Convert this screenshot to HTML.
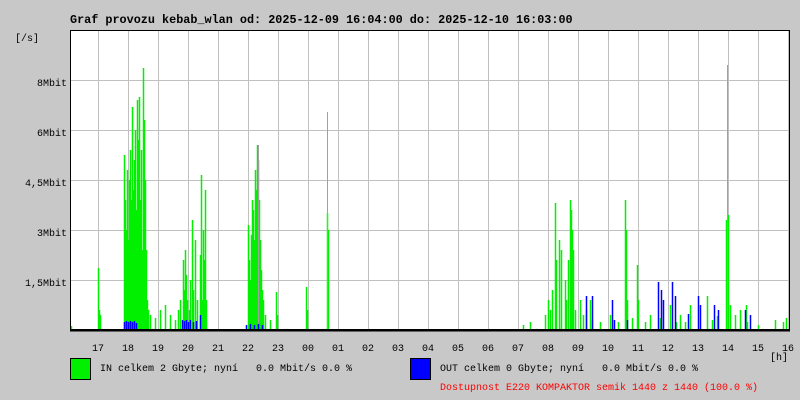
<!DOCTYPE html>
<html><head><meta charset="utf-8"><style>
html,body{margin:0;padding:0;background:#c8c8c8;width:800px;height:400px;overflow:hidden}
svg{display:block}
text{font-family:"Liberation Mono","DejaVu Sans Mono",monospace;font-size:10px;fill:#000;white-space:pre}
</style></head><body>
<svg width="800" height="400" xmlns="http://www.w3.org/2000/svg">
<rect width="800" height="400" fill="#c8c8c8"/>
<rect x="70" y="30" width="720" height="300" fill="#fff"/>
<g stroke="#c0c0c0" stroke-width="1" id="grid"></g>
<g id="g" stroke="#00f000" stroke-width="1.5"></g>
<g id="gr" stroke="#a0a0a0" stroke-width="1"></g>
<g id="b" stroke="#0000ff" stroke-width="1.5"></g>
<rect x="70.5" y="30.5" width="719" height="299" fill="none" stroke="#000" stroke-width="1"/>
<line x1="70" y1="330.5" x2="790" y2="330.5" stroke="#000" stroke-width="2"/>
<text x="70" y="23" style="font-size:11.8px;font-weight:bold">Graf provozu kebab_wlan od: 2025-12-09 16:04:00 do: 2025-12-10 16:03:00</text>
<text x="15" y="41">[/s]</text>
<g text-anchor="end">
<text x="67" y="86">8Mbit</text><text x="67" y="136">6Mbit</text><text x="67" y="186">4,5Mbit</text><text x="67" y="236">3Mbit</text><text x="67" y="286">1,5Mbit</text>
</g>
<g text-anchor="middle" id="hrs"></g>
<text x="770" y="360">[h]</text>
<rect x="70.5" y="358.5" width="20" height="21" fill="#00f000" stroke="#000"/>
<text x="100" y="371" xml:space="preserve">IN celkem 2 Gbyte; nyní   0.0 Mbit/s 0.0 %</text>
<rect x="410.5" y="358.5" width="20" height="21" fill="#0000ff" stroke="#000"/>
<text x="440" y="371" xml:space="preserve">OUT celkem 0 Gbyte; nyní   0.0 Mbit/s 0.0 %</text>
<text x="440" y="390" style="fill:#f00">Dostupnost E220 KOMPAKTOR semik 1440 z 1440 (100.0 %)</text>
</svg>
<script>
var NS="http://www.w3.org/2000/svg";
function L(g,x1,y1,x2,y2){var l=document.createElementNS(NS,"line");l.setAttribute("x1",x1);l.setAttribute("y1",y1);l.setAttribute("x2",x2);l.setAttribute("y2",y2);document.getElementById(g).appendChild(l);}
for(var k=0;k<24;k++){var x=98.5+30*k;L("grid",x,30,x,330);}
[80,130,180,230,280].forEach(function(y){L("grid",70,y+.5,790,y+.5);});
var h=["17","18","19","20","21","22","23","00","01","02","03","04","05","06","07","08","09","10","11","12","13","14","15","16"];
h.forEach(function(t,i){var e=document.createElementNS(NS,"text");e.setAttribute("x",98+30*i);e.setAttribute("y",351);e.textContent=t;document.getElementById("hrs").appendChild(e);});
var G=[[71,326],[98,268],[99,310],[100,315],[124,155],[125,200],[126,230],[127,170],[128,240],[129,180],[130,150],[131,200],[132,107],[133,190],[134,160],[135,130],[136,210],[137,100],[138,140],[139,97],[140,200],[141,150],[142,250],[143,68],[144,120],[145,180],[146,250],[147,300],[148,310],[150,315],[155,318],[160,310],[165,305],[170,315],[175,320],[178,310],[180,300],[183,260],[184,290],[185,250],[186,275],[187,300],[189,310],[190,280],[192,220],[193,290],[195,240],[197,300],[200,255],[201,175],[202,300],[203,230],[204,260],[205,190],[206,300],[248,225],[249,260],[250,280],[251,235],[252,200],[253,210],[254,240],[255,170],[256,190],[257,145],[258,160],[259,200],[260,240],[261,270],[262,290],[263,300],[265,315],[270,320],[276,292],[277,315],[306,287],[307,310],[327,213],[328,230],[523,325],[530,322],[545,315],[548,300],[550,310],[552,290],[555,203],[556,260],[559,240],[561,250],[565,280],[566,300],[568,260],[570,200],[571,210],[572,230],[573,250],[575,310],[580,300],[583,315],[586,310],[590,300],[592,320],[600,322],[610,315],[618,322],[625,200],[626,230],[627,300],[632,318],[637,265],[638,300],[645,322],[650,315],[660,318],[670,305],[676,322],[680,315],[685,322],[690,305],[707,296],[712,320],[717,316],[726,220],[728,215],[730,305],[735,315],[740,310],[746,305],[747,322],[758,325],[775,320],[783,322],[786,318]];
G.forEach(function(p){L("g",p[0]+.5,330,p[0]+.5,p[1]);});
[[327,112],[727,65],[258,145]].forEach(function(p){L("gr",p[0]+.5,330,p[0]+.5,p[1]);});
var B=[[124,322],[126,321],[128,322],[130,321],[132,322],[134,321],[136,323],[182,320],[184,321],[186,320],[188,322],[190,320],[193,322],[196,321],[200,315],[246,325],[250,324],[254,325],[258,324],[262,325],[586,296],[592,296],[612,300],[614,320],[627,320],[658,282],[661,290],[663,300],[672,282],[675,296],[688,314],[698,296],[700,305],[714,305],[718,310],[745,310],[750,315]];
B.forEach(function(p){L("b",p[0]+.5,330,p[0]+.5,p[1]);});
</script>
</body></html>
